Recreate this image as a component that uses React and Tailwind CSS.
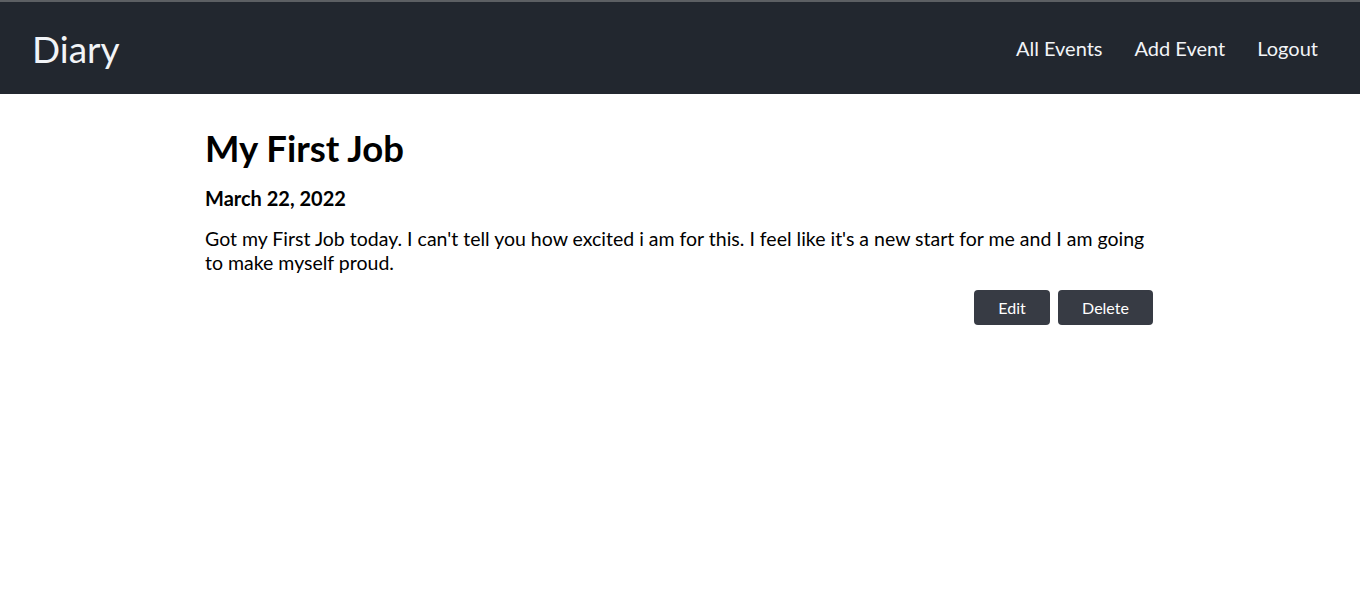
export default function App() {
  return (
    <div className="min-h-screen bg-white" style={{ fontFamily: "Lato, 'Noto Sans', sans-serif" }}>
      <div className="h-[2px] bg-[#5c5f63]" />
      <nav className="h-[92px] bg-[#22272f] flex items-center justify-between pl-[32px] pr-[42px]">
        <span className="text-[37px] text-[#f2f4f7] leading-none">Diary</span>
        <div className="flex items-center gap-[32px] text-[20px] text-[#f2f4f7]">
          <a>All Events</a>
          <a>Add Event</a>
          <a>Logout</a>
        </div>
      </nav>
      <main className="w-[950px] mx-auto pt-[31px] text-black">
        <h1 className="text-[36.5px] font-bold leading-[46px]">My First Job</h1>
        <h2 className="text-[20px] font-bold mt-[15px] leading-[24px]">March 22, 2022</h2>
        <p className="text-[19.5px] mt-[17px] leading-[24px]">
          Got my First Job today. I can't tell you how excited i am for this. I feel like it's a new start for me and I am going to make myself proud.
        </p>
        <div className="flex justify-end gap-[8px] mt-[15px] mr-[2px]">
          <button className="w-[76px] h-[35px] bg-[#373b44] text-white text-[16px] rounded-[4px]">Edit</button>
          <button className="w-[95px] h-[35px] bg-[#373b44] text-white text-[16px] rounded-[4px]">Delete</button>
        </div>
      </main>
    </div>
  );
}
